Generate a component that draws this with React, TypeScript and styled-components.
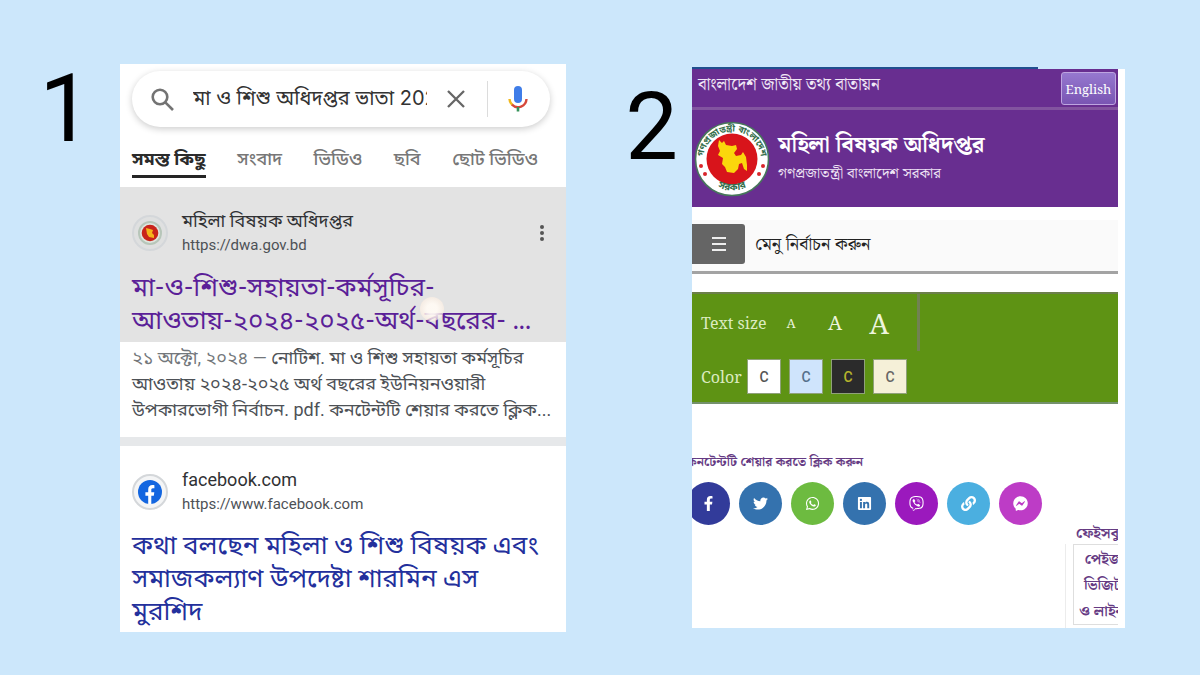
import React from 'react';
import styled, { createGlobalStyle } from 'styled-components';
import {
  FaFacebookF,
  FaTwitter,
  FaWhatsapp,
  FaLinkedin,
  FaViber,
  FaLink,
  FaFacebookMessenger,
} from 'react-icons/fa';

const sans = `Roboto, "Noto Sans Bengali", "Noto Sans", sans-serif`;
const serif = `"Noto Serif", "Noto Serif Bengali", "DejaVu Serif", serif`;

const GlobalStyle = createGlobalStyle`
  * { box-sizing: border-box; }
  body { margin: 0; background: #cce7fb; font-family: ${sans}; }
  button, input { font-family: inherit; padding: 0; border: 0; margin: 0; }
  button { cursor: pointer; }
  a { color: inherit; text-decoration: none; }
  h1, h2, p { margin: 0; font-weight: 400; }
`;

const Page = styled.main`
  display: grid;
  grid-template-columns: 120fr 446fr 126fr 433fr 75fr;
  align-items: start;
  padding: 64px 0 40px;
  overflow: hidden;
`;

const StepNumber = styled.div<{ $top: number }>`
  font-size: 94px;
  line-height: 90px;
  color: #000;
  text-align: right;
  padding: ${(p) => p.$top}px 14px 0 0;
`;

const FirstStep = styled(StepNumber)`
  padding-right: 28px;
`;

/* Search results panel */

const ResultsPanel = styled.section`
  min-width: 0;
  background: #fff;
  overflow: hidden;
`;

const SearchBar = styled.form`
  display: flex;
  align-items: center;
  height: 56px;
  margin: 7px 16px 0 12px;
  padding: 0 20px 0 18px;
  border-radius: 28px;
  background: #fff;
  box-shadow: 0 2px 7px rgba(0, 0, 0, 0.2);
`;

const SearchInput = styled.input`
  flex: 1;
  min-width: 0;
  height: 32px;
  margin: 0 18px 0 18px;
  font-family: Inter, ${sans};
  font-size: 20px;
  color: #333;
  background: transparent;
  outline: none;
`;

const IconButton = styled.button`
  display: grid;
  place-items: center;
  background: none;
  color: #5f6368;
`;

const Divider = styled.span`
  width: 1px;
  height: 36px;
  margin: 0 18px 0 20px;
  background: #dcdcdc;
`;

const Tabs = styled.nav`
  display: flex;
  justify-content: space-between;
  height: 60px;
  padding: 16px 28px 0 12px;
`;

const Tab = styled.a<{ $active?: boolean }>`
  height: 35px;
  font-size: 18px;
  line-height: 32px;
  white-space: nowrap;
  font-weight: ${(p) => (p.$active ? 700 : 500)};
  color: ${(p) => (p.$active ? '#2b2b2b' : '#777')};
  border-bottom: 3px solid ${(p) => (p.$active ? '#252525' : 'transparent')};
`;

const Result = styled.article<{ $visited?: boolean }>`
  position: relative;
  padding: 22px 12px ${(p) => (p.$visited ? 6 : 4)}px;
  background: ${(p) => (p.$visited ? '#e3e3e3' : '#fff')};
`;

const Source = styled.header`
  display: flex;
  align-items: center;
  gap: 14px;
  height: 48px;
`;

const SourceText = styled.div`
  flex: 1;
`;

const SourceName = styled.p`
  font-size: 18px;
  line-height: 24px;
  color: #303134;
`;

const SourceUrl = styled.p`
  font-size: 15px;
  line-height: 24px;
  color: #4d5156;
`;

const Favicon = styled.span<{ $tinted?: boolean }>`
  display: grid;
  place-items: center;
  width: 36px;
  height: 36px;
  border: 2px solid #d4d7da;
  border-radius: 50%;
  background: ${(p) => (p.$tinted ? '#dfe0e0' : '#f4f5f6')};
`;

const ResultTitle = styled.h2<{ $visited?: boolean }>`
  margin-top: 13px;
  font-family: ${(p) => (p.$visited ? `Lato, ${sans}` : sans)};
  font-size: 26px;
  line-height: 33px;
  white-space: nowrap;
  color: ${(p) => (p.$visited ? '#5b1f98' : '#23309c')};
`;

const TapMark = styled.span`
  position: absolute;
  left: 300px;
  top: 110px;
  width: 24px;
  height: 24px;
  border-radius: 50%;
  background: radial-gradient(rgba(255, 250, 244, 0.95) 30%, rgba(250, 225, 205, 0.5));
`;

const Snippet = styled.p`
  height: 95px;
  padding: 3px 12px 0;
  font-size: 18px;
  line-height: 26px;
  white-space: nowrap;
  color: #4d5156;
`;

const SnippetDate = styled.span`
  color: #73777b;
`;

const Separator = styled.div`
  height: 9px;
  background: #e6e8ea;
`;

/* Government portal panel */

const PortalPanel = styled.section`
  min-width: 0;
  margin-top: 3px;
  padding-right: 7px;
  background: #fff;
  overflow: hidden;
  font-family: ${serif};
`;

const LoadingBar = styled.div`
  height: 2px;
  margin-right: -7px;
  background: linear-gradient(to right, #20508f 80%, #cce7fb 80%);
`;

const TopBar = styled.div`
  display: flex;
  align-items: center;
  justify-content: space-between;
  height: 41px;
  padding: 2px 2px 1px 6px;
  background: #682e90;
  border-bottom: 3px solid #82549f;
  color: #f1e8f6;
  font-size: 17px;
`;

const PortalName = styled.span`
  padding-bottom: 8px;
  white-space: nowrap;
`;

const LanguageButton = styled.button`
  width: 55px;
  height: 33px;
  border: 1px solid #bda4e0;
  border-radius: 3px;
  background: linear-gradient(#9678cf, #7955b3);
  color: #fff;
  font-size: 13px;
`;

const Banner = styled.header`
  display: flex;
  align-items: center;
  gap: 8px;
  height: 97px;
  padding: 0 2px;
  background: #682e90;
  color: #fff;
`;

const BannerText = styled.div`
  padding-bottom: 8px;
`;

const BannerTitle = styled.h1`
  font-size: 23px;
  line-height: 34px;
  font-weight: 700;
  white-space: nowrap;
`;

const BannerSubtitle = styled.p`
  font-size: 15px;
  line-height: 24px;
  color: #efe4f5;
  white-space: nowrap;
`;

const MenuBar = styled.div`
  display: flex;
  align-items: center;
  gap: 10px;
  height: 54px;
  margin-top: 13px;
  padding-bottom: 3px;
  background: #fafafa;
  border-bottom: 3px solid #a3a3a3;
  font-size: 18px;
  color: #222;
`;

const MenuButton = styled.button`
  display: grid;
  place-items: center;
  width: 53px;
  height: 40px;
  border-radius: 0 3px 3px 0;
  background: #656565;
`;

const Accessibility = styled.div`
  margin-top: 18px;
  height: 112px;
  padding-left: 9px;
  background: #5e9314;
  border-top: 2px solid #6c7f4a;
  border-bottom: 2px solid #74916c;
  color: #dcebc0;
  font-size: 16px;
`;

const TextSizeRow = styled.div`
  display: flex;
  align-items: center;
  width: 219px;
  height: 57px;
  border-right: 3px solid #718252;
`;

const RowLabel = styled.span<{ $width: number }>`
  width: ${(p) => p.$width}px;
  white-space: nowrap;
`;

const SizeButton = styled.button<{ $size: number }>`
  width: 44px;
  background: none;
  color: #edf5dd;
  font-size: ${(p) => p.$size}px;
  line-height: 36px;
`;

const ColorRow = styled.div`
  display: flex;
  align-items: center;
  gap: 8px;
  height: 51px;
`;

const Swatch = styled.button<{ $bg: string; $fg: string }>`
  width: 34px;
  height: 35px;
  border: 1px solid #8fa17a;
  background: ${(p) => p.$bg};
  color: ${(p) => p.$fg};
  font-family: ${sans};
  font-size: 14px;
  font-weight: 500;
`;

const ShareTitle = styled.p`
  margin: 47px 0 0 -5px;
  font-size: 13px;
  line-height: 20px;
  font-weight: 700;
  color: #653a83;
  white-space: nowrap;
`;

const ShareRow = styled.div`
  display: flex;
  gap: 9px;
  margin: 11px 0 0 -5px;
`;

const ShareLink = styled.a<{ $bg: string }>`
  display: grid;
  place-items: center;
  flex: none;
  width: 43px;
  height: 43px;
  border-radius: 50%;
  background: ${(p) => p.$bg};
  color: #fff;
  font-size: 15px;
`;

const FacebookAside = styled.aside`
  width: 53px;
  height: 103px;
  margin-left: auto;
  overflow: hidden;
  color: #653a83;
  font-size: 15px;
  font-weight: 700;
`;

const AsideHeading = styled.p`
  height: 19px;
  padding-left: 11px;
  line-height: 14px;
  font-weight: 700;
  white-space: nowrap;
`;

const AsideFrame = styled.div`
  padding-left: 7px;
  height: 84px;
  border-left: 1px solid #ececec;
`;

const AsideBox = styled.a`
  display: flex;
  flex-direction: column;
  align-items: center;
  width: 60px;
  height: 81px;
  border: 1px solid #dedede;
  line-height: 26px;
  white-space: nowrap;
`;

const Emblem = ({ size, id }: { size: number; id: string }) => (
  <svg width={size} height={size} viewBox="0 0 76 76" role="img" aria-label="Government seal">
    <defs>
      <path id={`${id}-top`} d="M10 47 A29 29 0 1 1 66 47" />
      <path id={`${id}-bottom`} d="M14 59 A33 33 0 0 0 62 59" />
    </defs>
    <circle cx="38" cy="38" r="36.5" fill="#fff" stroke="#47765b" strokeWidth="1.6" />
    <circle cx="38" cy="38" r="25.5" fill="#d8141b" />
    <path
      d="M25 19l3 3 2-2 2 4 6 1 4-1 1 4-3 4 2 3 5-1 2-3 3 5 1 8 0 6-3-2-2-6-3 1-1 5-4 4-7-1-2-5-3-3 1-6-5-3 2-4-2-5z"
      fill="#fbd60c"
    />
    <g fontFamily="Noto Sans Bengali, sans-serif" fontWeight="700" fill="#356e4c" textAnchor="middle">
      <text fontSize="9">
        <textPath href={`#${id}-top`} startOffset="50%">গণপ্রজাতন্ত্রী বাংলাদেশ</textPath>
      </text>
      <text fontSize="10">
        <textPath href={`#${id}-bottom`} startOffset="50%">সরকার</textPath>
      </text>
    </g>
    <g fill="#d8262b">
      <circle cx="7" cy="45" r="2" />
      <circle cx="11" cy="53" r="2" />
      <circle cx="69" cy="45" r="2" />
      <circle cx="65" cy="53" r="2" />
    </g>
  </svg>
);

const SealIcon = () => (
  <svg width="30" height="30" viewBox="0 0 30 30" aria-hidden="true">
    <circle cx="15" cy="15" r="11" fill="#dfe5df" stroke="#b7c6b9" strokeWidth="2" />
    <circle cx="15" cy="15" r="8.3" fill="#c9251b" />
    <path d="M11 10l4 1 3 1-1 3 2 2v3l-5-1-2-3z" fill="#f5b51b" />
  </svg>
);

const FacebookIcon = () => (
  <svg width="24" height="24" viewBox="0 0 24 24" aria-hidden="true">
    <circle cx="12" cy="12" r="12" fill="#1366e0" />
    <path
      d="M10.2 24v-8.2H7.4v-3.5h2.8V9.6c0-2.9 1.6-4.5 4.3-4.5.9 0 1.9.2 1.9.2v2.9h-1.5c-1.3 0-1.6.8-1.6 1.6v2.5h3l-.5 3.5h-2.5V24z"
      fill="#fff"
    />
  </svg>
);

const shares = [
  { name: 'Facebook', bg: '#323b9a', Icon: FaFacebookF },
  { name: 'Twitter', bg: '#3472ae', Icon: FaTwitter },
  { name: 'WhatsApp', bg: '#6dbb40', Icon: FaWhatsapp },
  { name: 'LinkedIn', bg: '#3472ae', Icon: FaLinkedin },
  { name: 'Viber', bg: '#9b19bd', Icon: FaViber },
  { name: 'Copy link', bg: '#4bafe0', Icon: FaLink },
  { name: 'Messenger', bg: '#bd3cc6', Icon: FaFacebookMessenger },
];

const swatches = [
  { name: 'White', bg: '#ffffff', fg: '#555555' },
  { name: 'Blue', bg: '#cfe4fc', fg: '#55708c' },
  { name: 'Black', bg: '#2b2b2b', fg: '#b7b42c' },
  { name: 'Cream', bg: '#f5f0d8', fg: '#666666' },
];

export default function App() {
  return (
    <>
      <GlobalStyle />
      <Page>
        <FirstStep $top={0}>1</FirstStep>

        <ResultsPanel>
          <SearchBar onSubmit={(e: React.FormEvent) => e.preventDefault()}>
            <svg width="25" height="25" viewBox="0 0 25 25" fill="none" stroke="#737373" strokeWidth="2.6" aria-hidden="true">
              <circle cx="10" cy="10" r="7.3" />
              <path d="M15.3 15.3L23 23" />
            </svg>
            <SearchInput aria-label="Search" defaultValue="মা ও শিশু অধিদপ্তর ভাতা 2024" />
            <IconButton type="button" aria-label="Clear">
              <svg width="22" height="22" viewBox="0 0 22 22" stroke="#666" strokeWidth="2.3" aria-hidden="true">
                <path d="M3 3l16 16M19 3L3 19" />
              </svg>
            </IconButton>
            <Divider />
            <IconButton type="button" aria-label="Voice search">
              <svg width="24" height="28" viewBox="0 0 24 28" fill="none" aria-hidden="true">
                <rect x="8" y="1" width="8" height="17" rx="4" fill="#3f7de8" />
                <path d="M3.5 14a8.5 8.5 0 0 0 3 6" stroke="#f0b81c" strokeWidth="2.4" />
                <path d="M6 19.6a8.5 8.5 0 0 0 14.5-5.6" stroke="#d6483b" strokeWidth="2.4" />
                <path d="M12 22v4.5" stroke="#36935a" strokeWidth="2.6" />
              </svg>
            </IconButton>
          </SearchBar>

          <Tabs>
            <Tab href="#all" $active>সমস্ত কিছু</Tab>
            <Tab href="#news">সংবাদ</Tab>
            <Tab href="#videos">ভিডিও</Tab>
            <Tab href="#images">ছবি</Tab>
            <Tab href="#shorts">ছোট ভিডিও</Tab>
          </Tabs>

          <Result $visited>
            <Source>
              <Favicon $tinted><SealIcon /></Favicon>
              <SourceText>
                <SourceName>মহিলা বিষয়ক অধিদপ্তর</SourceName>
                <SourceUrl>https://dwa.gov.bd</SourceUrl>
              </SourceText>
              <IconButton type="button" aria-label="More options">
                <svg width="24" height="18" viewBox="0 0 24 18" fill="#555" aria-hidden="true">
                  <circle cx="12" cy="3" r="2" />
                  <circle cx="12" cy="9" r="2" />
                  <circle cx="12" cy="15" r="2" />
                </svg>
              </IconButton>
            </Source>
            <ResultTitle $visited>
              <a href="#dwa">মা-ও-শিশু-সহায়তা-কর্মসূচির-<br />আওতায়-২০২৪-২০২৫-অর্থ-বছরের- ...</a>
            </ResultTitle>
            <TapMark />
          </Result>
          <Snippet>
            <SnippetDate>২১ অক্টো, ২০২৪ — </SnippetDate>নোটিশ. মা ও শিশু সহায়তা কর্মসূচির<br />
            আওতায় ২০২৪-২০২৫ অর্থ বছরের ইউনিয়নওয়ারী<br />
            উপকারভোগী নির্বাচন. pdf. কনটেন্টটি শেয়ার করতে ক্লিক...
          </Snippet>
          <Separator />

          <Result>
            <Source>
              <Favicon><FacebookIcon /></Favicon>
              <SourceText>
                <SourceName>facebook.com</SourceName>
                <SourceUrl>https://www.facebook.com</SourceUrl>
              </SourceText>
            </Source>
            <ResultTitle>
              <a href="#facebook">কথা বলছেন মহিলা ও শিশু বিষয়ক এবং<br />সমাজকল্যাণ উপদেষ্টা শারমিন এস<br />মুরশিদ</a>
            </ResultTitle>
          </Result>
        </ResultsPanel>

        <StepNumber $top={18}>2</StepNumber>

        <PortalPanel>
          <LoadingBar />
          <TopBar>
            <PortalName>বাংলাদেশ জাতীয় তথ্য বাতায়ন</PortalName>
            <LanguageButton type="button">English</LanguageButton>
          </TopBar>
          <Banner>
            <Emblem size={76} id="seal" />
            <BannerText>
              <BannerTitle>মহিলা বিষয়ক অধিদপ্তর</BannerTitle>
              <BannerSubtitle>গণপ্রজাতন্ত্রী বাংলাদেশ সরকার</BannerSubtitle>
            </BannerText>
          </Banner>
          <MenuBar>
            <MenuButton type="button" aria-label="Menu">
              <svg width="16" height="16" viewBox="0 0 16 16" stroke="#eee" strokeWidth="2" aria-hidden="true">
                <path d="M1 2h14M1 8h14M1 14h14" />
              </svg>
            </MenuButton>
            <span>মেনু নির্বাচন করুন</span>
          </MenuBar>
          <Accessibility>
            <TextSizeRow>
              <RowLabel $width={68}>Text size</RowLabel>
              <SizeButton type="button" $size={13}>A</SizeButton>
              <SizeButton type="button" $size={20}>A</SizeButton>
              <SizeButton type="button" $size={28}>A</SizeButton>
            </TextSizeRow>
            <ColorRow>
              <RowLabel $width={38}>Color</RowLabel>
              {swatches.map((s) => (
                <Swatch key={s.name} type="button" aria-label={s.name} $bg={s.bg} $fg={s.fg}>C</Swatch>
              ))}
            </ColorRow>
          </Accessibility>
          <ShareTitle>কনটেন্টটি শেয়ার করতে ক্লিক করুন</ShareTitle>
          <ShareRow>
            {shares.map(({ name, bg, Icon }) => (
              <ShareLink key={name} href="#share" aria-label={name} $bg={bg}>
                <Icon />
              </ShareLink>
            ))}
          </ShareRow>
          <FacebookAside>
            <AsideHeading>ফেইসবুক</AsideHeading>
            <AsideFrame>
              <AsideBox href="#page">
                <span>পেইজ</span>
                <span>ভিজিট</span>
                <span>ও লাইক</span>
              </AsideBox>
            </AsideFrame>
          </FacebookAside>
        </PortalPanel>
      </Page>
    </>
  );
}
